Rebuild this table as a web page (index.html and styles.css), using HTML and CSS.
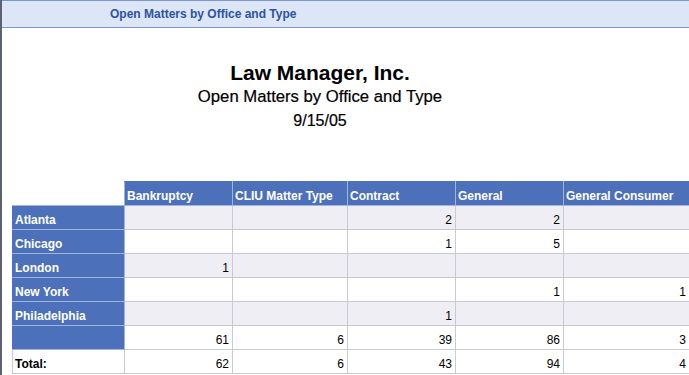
FILE: index.html
```html
<!DOCTYPE html>
<html>
<head>
<meta charset="utf-8">
<link rel="stylesheet" href="styles.css">
</head>
<body>
<div class="page">
  <div class="topbar"><span class="topbar-title">Open Matters by Office and Type</span></div>
  <div class="report-head">
    <div class="company">Law Manager, Inc.</div>
    <div class="subtitle">Open Matters by Office and Type</div>
    <div class="date">9/15/05</div>
  </div>
  <table class="grid">
    <colgroup>
      <col class="c-label"><col class="c1"><col class="c2"><col class="c3"><col class="c4"><col class="c5">
    </colgroup>
    <tr class="head">
      <td class="corner"></td>
      <th>Bankruptcy</th>
      <th>CLIU Matter Type</th>
      <th>Contract</th>
      <th>General</th>
      <th>General Consumer</th>
    </tr>
    <tr class="alt">
      <th class="label">Atlanta</th><td></td><td></td><td>2</td><td>2</td><td></td>
    </tr>
    <tr>
      <th class="label">Chicago</th><td></td><td></td><td>1</td><td>5</td><td></td>
    </tr>
    <tr class="alt">
      <th class="label">London</th><td>1</td><td></td><td></td><td></td><td></td>
    </tr>
    <tr>
      <th class="label">New York</th><td></td><td></td><td></td><td>1</td><td>1</td>
    </tr>
    <tr class="alt">
      <th class="label">Philadelphia</th><td></td><td></td><td>1</td><td></td><td></td>
    </tr>
    <tr>
      <th class="label"></th><td>61</td><td>6</td><td>39</td><td>86</td><td>3</td>
    </tr>
    <tr class="total">
      <th class="total-label">Total:</th><td>62</td><td>6</td><td>43</td><td>94</td><td>4</td>
    </tr>
  </table>
</div>
</body>
</html>
```
FILE: styles.css
```css
html, body {
  margin: 0;
  padding: 0;
  background: #ffffff;
}
body {
  font-family: "Liberation Sans", Arial, sans-serif;
  width: 689px;
  height: 375px;
  overflow: hidden;
}
.page {
  border-left: 2px solid #5d6273;
  min-height: 375px;
  box-sizing: border-box;
}
.topbar {
  height: 26px;
  background: #dce6f7;
  border-top: 1px solid #7e96c9;
  border-bottom: 1px solid #7e96c9;
  display: flex;
  align-items: center;
  padding-left: 108px;
}
.topbar-title {
  font-size: 12px;
  font-weight: bold;
  color: #2d549e;
}
.report-head {
  width: 636px;
  text-align: center;
  color: #000;
  padding-top: 33px;
  height: 126px;
  box-sizing: border-box;
}
.company {
  font-size: 21px;
  font-weight: bold;
  line-height: 24px;
}
.subtitle {
  font-size: 16.7px;
  line-height: 22px;
  margin-top: 1px;
  -webkit-text-stroke: 0.2px #000;
}
.date {
  font-size: 16px;
  line-height: 22px;
  margin-top: 2px;
  -webkit-text-stroke: 0.2px #000;
}
.grid {
  border-collapse: collapse;
  margin-left: 10px;
  margin-top: 27px;
  font-size: 12px;
  table-layout: fixed;
  width: 677px;
}
.c-label { width: 112px; }
.c1 { width: 108px; }
.c2 { width: 115px; }
.c3 { width: 108px; }
.c4 { width: 108px; }
.c5 { width: 126px; }
.grid td, .grid th {
  height: 24px;
  padding: 0 3px 2px 2px;
  border: 1px solid #c9cad4;
  vertical-align: bottom;
  box-sizing: border-box;
  white-space: nowrap;
  overflow: hidden;
  line-height: 14px;
}
.grid td {
  text-align: right;
  color: #000;
}
.grid th {
  text-align: left;
  font-weight: bold;
}
.head th {
  background: #4c70ba;
  color: #fff;
  border-color: #a3b4da;
  border-top-color: #4c70ba;
}
.grid td.corner {
  border: none;
  background: #fff;
}
.grid th.label {
  background: #4c70ba;
  color: #fff;
  border-color: #a3b4da;
  border-left-color: #4c70ba;
}
.alt td {
  background: #eeeef4;
}
.grid th.total-label {
  background: #fff;
  color: #000;
}
```
